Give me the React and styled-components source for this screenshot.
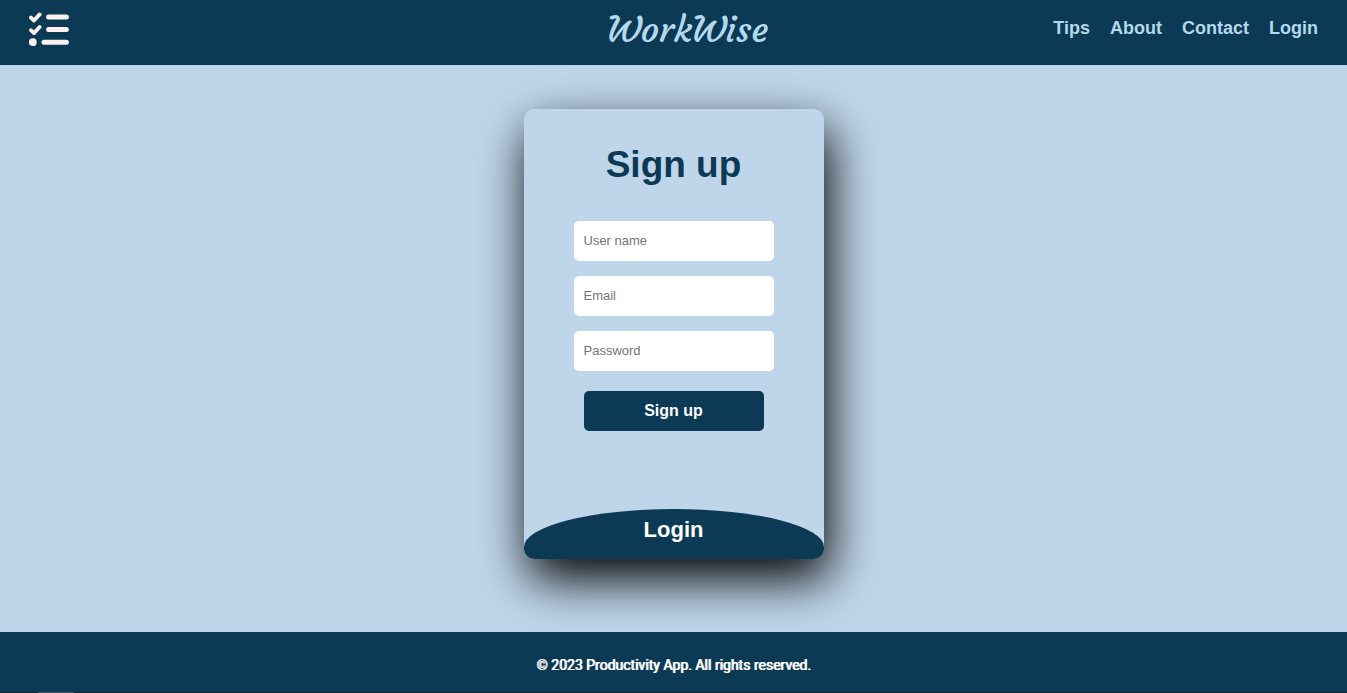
import React from "react";
import styled, { createGlobalStyle } from "styled-components";

const navy = "#0c3953";
const sky = "#bfd6ea";
const paleBlue = "#b4d8ed";

const GlobalStyle = createGlobalStyle`
  *, *::before, *::after { box-sizing: border-box; }
  body {
    margin: 0;
    background: ${sky};
    font-family: "Liberation Sans", Arial, sans-serif;
  }
`;

const Page = styled.div`
  display: flex;
  flex-direction: column;
  min-height: 100vh;
`;

const Header = styled.header`
  display: grid;
  grid-template-columns: 1fr auto 1fr;
  align-items: center;
  height: 65px;
  padding: 0 29px 8px;
  background: ${navy};
`;

const LogoLink = styled.a`
  display: flex;
  width: 40px;
`;

const Brand = styled.h1`
  margin: 0;
  padding: 2px 0 0 28px;
  color: ${paleBlue};
  font: 400 36px/44px Courgette, "Liberation Serif", serif;
`;

const Nav = styled.nav`
  display: flex;
  justify-content: flex-end;
  gap: 20px;
  padding-bottom: 2px;
`;

const NavLink = styled.a`
  color: ${paleBlue};
  font-size: 18px;
  font-weight: 700;
  line-height: 20px;
  text-decoration: none;
`;

const Main = styled.main`
  flex: 1;
  display: flex;
  justify-content: center;
  align-items: flex-start;
  padding: 44px 16px 73px;
`;

const Card = styled.section`
  display: flex;
  flex-direction: column;
  width: 300px;
  min-height: 450px;
  overflow: hidden;
  border-radius: 10px;
  background: ${sky};
  box-shadow: 5px 20px 50px #000;
`;

const Form = styled.form`
  display: flex;
  flex-direction: column;
  gap: 15px;
  padding: 35px 50px;
`;

const FormTitle = styled.h2`
  margin: 0 0 20px;
  color: ${navy};
  font-size: 37px;
  line-height: 42px;
  text-align: center;
`;

const Field = styled.input`
  width: 100%;
  height: 40px;
  padding: 0 10px 2px;
  border: 0;
  border-radius: 5px;
  background: #fff;
  font: 13px "Liberation Sans", Arial, sans-serif;

  &::placeholder { color: #757575; }
`;

const SubmitButton = styled.button`
  height: 40px;
  margin: 5px 10px 0;
  border: 0;
  border-radius: 5px;
  background: ${navy};
  color: #fff;
  font: 700 16px "Liberation Sans", Arial, sans-serif;
  cursor: pointer;
`;

const LoginTab = styled.button`
  height: 50px;
  margin-top: auto;
  padding: 0 0 8px;
  border: 0;
  border-radius: 50% 50% 0 0 / 38px 38px 0 0;
  background: ${navy};
  color: #fff;
  font: 700 22px "Liberation Sans", Arial, sans-serif;
  cursor: pointer;
`;

const Footer = styled.footer`
  position: relative;
  background: ${navy};
  color: #fff;
  font: 400 14px/18px Roboto, sans-serif;
  text-align: center;
  text-shadow: 1px 0 #fff;
`;

const Copyright = styled.p`
  height: 60px;
  margin: 0;
  padding-top: 24px;
`;

const BottomEdge = styled.div`
  height: 1px;
  padding-left: 38px;
  background: #1c2226;

  &::before {
    content: "";
    display: block;
    width: 36px;
    height: 1px;
    background: #4d5357;
  }
`;

const fields = [
  { name: "username", type: "text", label: "User name" },
  { name: "email", type: "email", label: "Email" },
  { name: "password", type: "password", label: "Password" },
];

const links = ["Tips", "About", "Contact", "Login"];

function ChecklistIcon() {
  return (
    <svg
      width="40"
      height="36"
      viewBox="0 0 40 36"
      fill="none"
      stroke="#fdf1ef"
      strokeLinecap="round"
      strokeLinejoin="round"
      aria-hidden="true"
    >
      <path d="M1.9 6.6 5 9.5 10.6 3.4M1.9 19.2 5 22.1 10.6 16" strokeWidth="3.8" />
      <path d="M19.6 6H37.4M19.6 18.6H37.4M15 31.2H37.4" strokeWidth="5" />
      <circle cx="3.8" cy="31.2" r="3.9" fill="#fdf1ef" stroke="none" />
    </svg>
  );
}

export default function App() {
  return (
    <>
      <GlobalStyle />
      <Page>
        <Header>
          <LogoLink href="#home" aria-label="WorkWise home">
            <ChecklistIcon />
          </LogoLink>
          <Brand>WorkWise</Brand>
          <Nav>
            {links.map((link) => (
              <NavLink key={link} href={`#${link.toLowerCase()}`}>
                {link}
              </NavLink>
            ))}
          </Nav>
        </Header>
        <Main>
          <Card>
            <Form onSubmit={(event) => event.preventDefault()}>
              <FormTitle>Sign up</FormTitle>
              {fields.map(({ name, type, label }) => (
                <Field key={name} name={name} type={type} placeholder={label} aria-label={label} />
              ))}
              <SubmitButton type="submit">Sign up</SubmitButton>
            </Form>
            <LoginTab type="button">Login</LoginTab>
          </Card>
        </Main>
        <Footer>
          <Copyright>© 2023 Productivity App. All rights reserved.</Copyright>
          <BottomEdge />
        </Footer>
      </Page>
    </>
  );
}
